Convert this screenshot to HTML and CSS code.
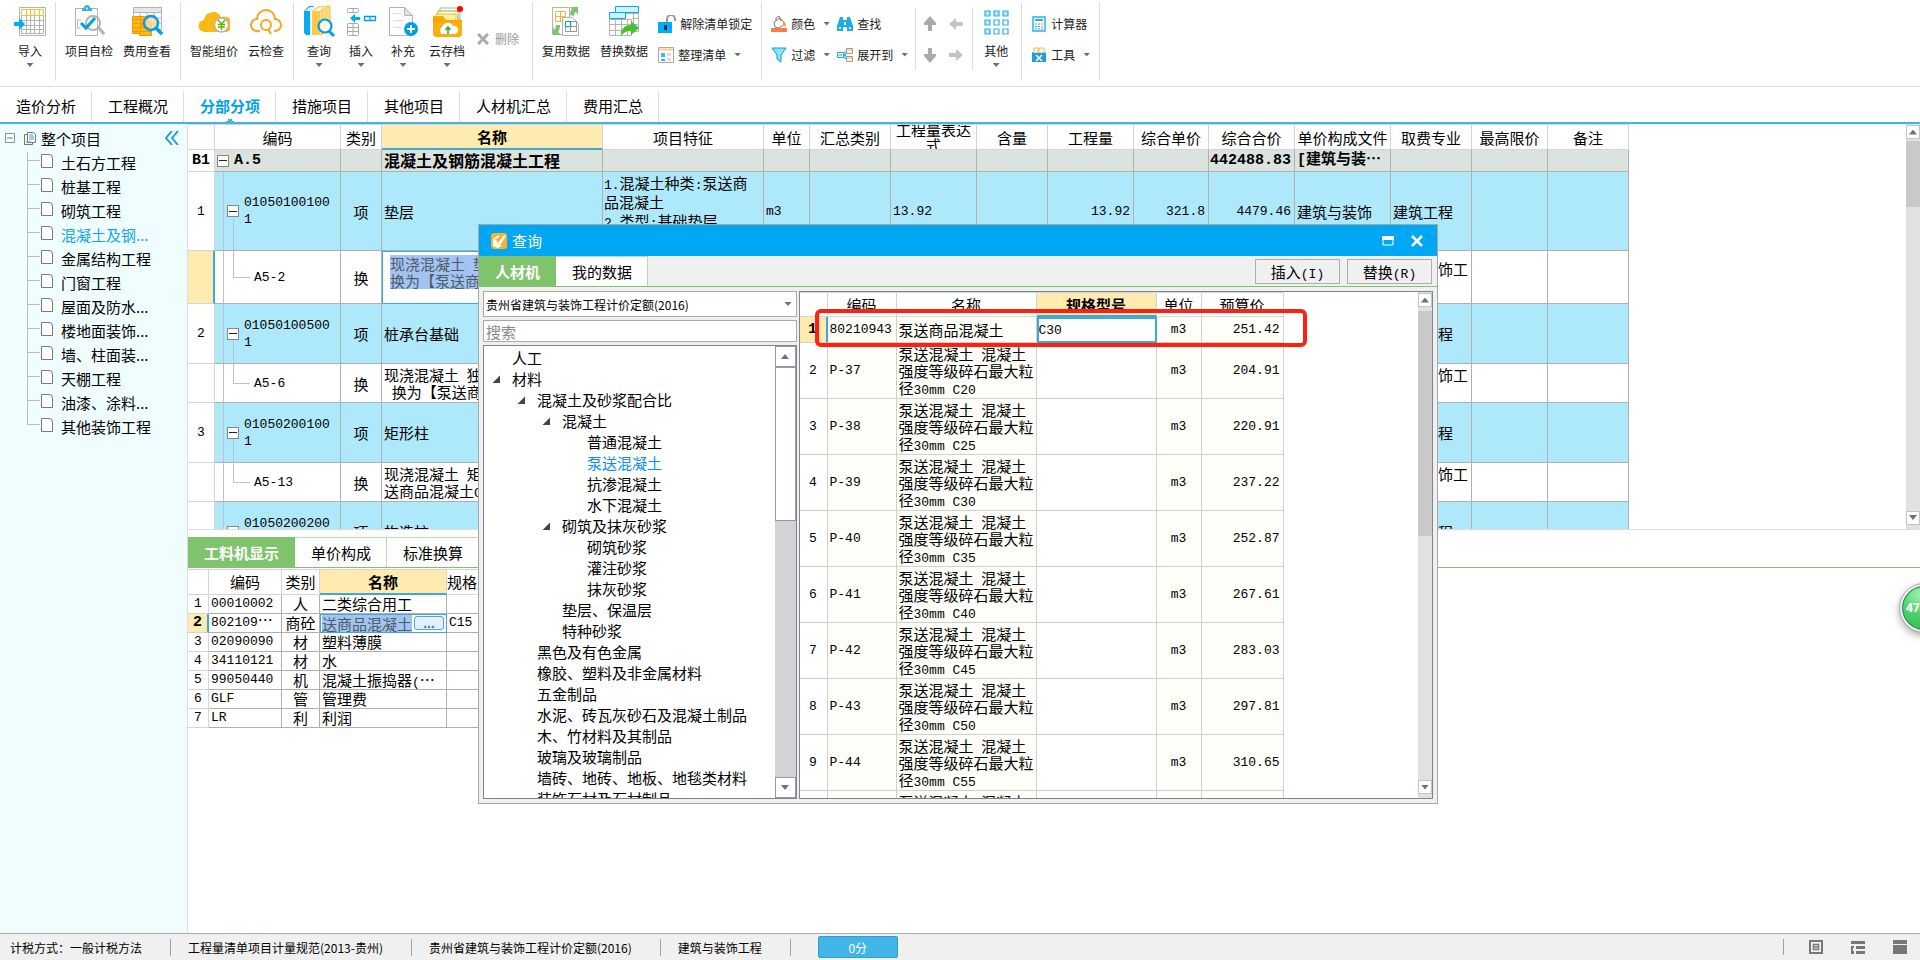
FILE: index.html
```html
<!DOCTYPE html>
<html lang="zh-CN">
<head>
<meta charset="utf-8">
<title>工程计价</title>
<link rel="stylesheet" href="styles.css">
</head>
<body>
<header class="ribbon">
  <div class="group first">
    <button class="big"><svg class="ic32" viewBox="0 0 32 32"><g fill="none" stroke="#b4b4b4" stroke-width="1"><path d="M5.500 2.500h26v28h-26z"/><path d="M7.500 10.500v18h22v-18M7.500 15.500h22M7.500 20.500h22M7.500 24.500h22M12.500 10v19M16.500 10v19M20.500 10v19M25.500 10v19"/></g><path d="M7.500 4.500h22v6h-22zM12.500 4.500v6M16.500 4.500v6M20.500 4.500v6M25.500 4.500v6" fill="none" stroke="#fbc02d"/><path d="M0 17h5v-4l6 6-6 6v-4H0z" fill="#00adef"/></svg><span>导入</span><i class="caret"></i></button>
  </div>
  <div class="group">
    <button class="big"><svg class="ic32" viewBox="0 0 32 32"><path d="M2.500 3.500h22v27h-22z" fill="#fff" stroke="#b4b4b4"/><path d="M9 6V3h2a3 3 0 0 1 6 0h2v3z" fill="#2fb4e8"/><circle cx="14" cy="3.500" r="1" fill="#fff"/><path d="M4 15h4M4.500 15v8h3" fill="none" stroke="#b4b4b4"/><circle cx="20" cy="18" r="7" fill="none" stroke="#b4b4b4" stroke-width="2"/><path d="M25 22l6 7" stroke="#b4b4b4" stroke-width="3"/><path d="M8 18l5 5 9-10" fill="none" stroke="#00a0e9" stroke-width="3"/></svg><span>项目自检</span></button>
    <button class="big"><svg class="ic32" viewBox="0 0 32 32"><path d="M2.500 2.500h28v22h-28z" fill="#fff" stroke="#b4b4b4"/><path d="M2.500 2.500h28v5h-28z" fill="#e6e6e6" stroke="#b4b4b4"/><path d="M16 13h14M16 18h14M9 8v5M16 8v16M23 8v16" stroke="#b4b4b4"/><g fill="#fdb813" stroke="#f39800"><path d="M1.500 11.500h8v17h-8zM9.500 11.500h8v17h-8z"/><path d="M11.500 17.500h9v13h-12v-4z"/><path d="M1.500 14.500h16M1.500 18.500h16M1.500 22.500h16M1.500 26.500h19"/></g><circle cx="20" cy="18" r="7" fill="#ffd9a0" fill-opacity=".8" stroke="#00a0e9" stroke-width="2.500"/><path d="M25 23l6 6" stroke="#00a0e9" stroke-width="3.500"/></svg><span>费用查看</span></button>
  </div>
  <div class="group">
    <button class="big"><svg class="ic32" viewBox="0 0 32 32"><path d="M7 27a6 6 0 0 1-1-12 9 9 0 0 1 17-3 8 8 0 0 1 6 15z" fill="#fdb813"/><circle cx="23.500" cy="20" r="7" fill="#fff" stroke="#b9b4a4" stroke-width="1.500"/><path d="M20 15l3.500 4 3.500-4M20 19.500h7M20 22h7M23.500 19v6" fill="none" stroke="#5fb500" stroke-width="1.400"/></svg><span>智能组价</span></button>
    <button class="big"><svg class="ic32" viewBox="0 0 32 32"><g fill="none" stroke="#fba31c" stroke-width="2"><path d="M10 26H7a6 6 0 0 1 0-12 9 9 0 0 1 18 0 6 6 0 0 1 0 12h-1"/><circle cx="16" cy="20" r="5"/><path d="M18 24l3 5"/></g></svg><span>云检查</span></button>
  </div>
  <div class="group roomy">
    <button class="big"><svg class="ic32" viewBox="0 0 32 32"><path d="M1 6l5-5h5L7 6v24H3l-2-2z" fill="#00adef"/><path d="M2 6l5-4h3L7 6z" fill="#fff"/><path d="M9 6l7-5h6l-5 5v24H9z" fill="#fdc94b"/><path d="M11 6l6-4h3l-4 4z" fill="#fff"/><path d="M18 6l6-5h3v24l-9 5z" fill="#fdd878" stroke="#f5bf50"/><circle cx="22" cy="21" r="6.500" fill="#fff" fill-opacity=".85" stroke="#00a0e9" stroke-width="2.200"/><path d="M26 26l5 5" stroke="#00a0e9" stroke-width="3"/></svg><span>查询</span><i class="caret"></i></button>
    <button class="big"><svg class="ic32" viewBox="0 0 32 32"><g fill="none" stroke="#a8a8a8"><rect x="2.500" y="3.500" width="11" height="4" rx="1"/><rect x="2.500" y="18.500" width="11" height="12" rx="1"/><path d="M8 3v5M8 18v13M2 22.500h12M2 26.500h12"/></g><path d="M5 13l5-4v3h5v3h-5v3z" fill="#00adef"/><path d="M19.500 11.500h11v4h-11zM25 11v5" fill="none" stroke="#00a0e9" stroke-width="1.300"/></svg><span>插入</span><i class="caret"></i></button>
    <button class="big"><svg class="ic32" viewBox="0 0 32 32"><path d="M2.500 2.500h15l8 8v20h-23z" fill="#fff" stroke="#b4b4b4"/><path d="M17.500 2.500v8h8z" fill="#e0e0e0" stroke="#b4b4b4"/><path d="M6 8.500h8M6 15.500h11M6 22.500h8" stroke="#ddd"/><circle cx="24" cy="24" r="7" fill="#00a0e9"/><path d="M24 20v8M20 24h8" stroke="#fff" stroke-width="2"/></svg><span>补充</span><i class="caret"></i></button>
    <button class="big"><svg class="ic32" viewBox="0 0 32 32"><path d="M9 3h20v12H9z" fill="#fff" stroke="#b8ab90"/><path d="M7 6h20v12H7z" fill="#fff" stroke="#80b040"/><path d="M5 9h20v12H5z" fill="#fff3a0" stroke="#fdb813"/><path d="M2 11h10l3 4h16v15l-2 2H4l-2-2z" fill="#fdae0b"/><path d="M2 12h8l3 3h18v2H2z" fill="#f59a00" opacity=".5"/><path d="M11 29a4 4 0 0 1 0-7 6 6 0 0 1 11-1 4 4 0 0 1 2 8z" fill="#fff"/><path d="M17 29v-6M14.500 25l2.500-3 2.500 3" fill="none" stroke="#32a532" stroke-width="1.500"/><circle cx="29" cy="4" r="3" fill="#f00"/></svg><span>云存档</span><i class="caret"></i></button>
    <button class="small muted solo"><svg class="ic12" viewBox="0 0 12 12"><path d="M1 1l10 10M11 1L1 11" stroke="#aaa" stroke-width="3"/></svg><span>删除</span></button>
  </div>
  <div class="group">
    <button class="big"><svg class="ic32" viewBox="0 0 32 32"><path d="M2.500 2.500h17v27h-17z" fill="#fff" stroke="#b4b4b4"/><path d="M5.500 6.500h10v10h-10zM5 11.500h11M10.500 6v11" fill="none" stroke="#fbb03b"/><path d="M12.500 12.500h10l6 6v12h-16z" fill="#fff" stroke="#b4b4b4"/><path d="M15.500 16.500h11v10h-11zM15 21.500h12M20.500 16v11" fill="none" stroke="#999"/><path d="M15.500 16.500h5v5h-5z" fill="none" stroke="#00a0e9"/><path d="M20 2h8v8l-2-3c-1 0-2 2-2 4l-4-1c0-3 1-5 2-6z" fill="#7fc36c"/><path d="M12 30H3v-8l2 3 1-5h4c0 3-1 6-2 7z" fill="#7fc36c"/></svg><span>复用数据</span></button>
    <button class="big"><svg class="ic32" viewBox="0 0 32 32"><g fill="#fff" stroke="#b4b4b4"><path d="M6.500 8.500h24v18h-24z"/><path d="M1.500 14.500h22v16h-22z"/><path d="M7.500 14v17M13.500 14v17M19.500 14v17M25.500 8v10M1 19.500h30M1 25.500h20M24 13.500h7" fill="none"/></g><path d="M7.500 1.500h23v6h-23zM1.500 7.500h16v6h-16z" fill="#c9f3ff" stroke="#00adef"/><path d="M13 31c0-8 4-11 10-11v-4l8 7-8 7v-4c-4 0-7 1-10 5z" fill="#43c02c"/></svg><span>替换数据</span></button>
    <div class="stack">
      <button class="small"><svg class="ic18" viewBox="0 0 18 18"><path d="M9 8V4a4 4 0 0 1 8 0v2" fill="none" stroke="#999" stroke-width="2"/><rect x="0" y="7" width="14" height="11" fill="#00adef"/><path d="M6 10h3v5H6z" fill="#035"/></svg><span>解除清单锁定</span></button>
      <button class="small"><svg class="ic16" viewBox="0 0 16 16"><path d="M.500.500h15v15H.500z" fill="#fff" stroke="#aaa"/><path d="M1 2.500h14" stroke="#fbc987" stroke-width="2"/><path d="M3 7h4M3 9h4M3 13h4" stroke="#00a0e9" stroke-width="1.500"/><path d="M9 6h4v3H9zM9 11h4v3H9z" fill="#ddd"/></svg><span>整理清单</span><i class="caret"></i></button>
    </div>
  </div>
  <div class="group tight">
    <div class="stack">
      <button class="small"><svg class="ic16" viewBox="0 0 16 16"><path d="M3 6l6-4 5 6-6 4-4-1z" fill="#fff" stroke="#8b7b6b"/><path d="M5 5V2l3-2 2 5" fill="none" stroke="#8b7b6b"/><path d="M12 4l3 4-1 3-2-3z" fill="#f8a030"/><path d="M0 12h16v4H0z" fill="#fa7d50"/></svg><span>颜色</span><i class="caret"></i></button>
      <button class="small"><svg class="ic16" viewBox="0 0 16 16"><path d="M1 1h14l-5 7v7l-4-3V8z" fill="#8fe0fb" stroke="#00a0e9"/></svg><span>过滤</span><i class="caret"></i></button>
    </div>
    <div class="stack">
      <button class="small"><svg class="ic16" viewBox="0 0 16 16"><path d="M3 1h3v3h4V1h3l3 9v5h-6v-4H6v4H0v-5z" fill="#1badea"/><path d="M2 11h2v2H2zM12 11h2v2h-2zM7 6h2v3H7z" fill="#fff"/></svg><span>查找</span></button>
      <button class="small"><svg class="ic16" viewBox="0 0 16 16"><path d="M.500 5.500h6v5h-6z" fill="#fff" stroke="#1badea"/><path d="M9.500 1.500h6v5h-6zM9.500 9.500h6v5h-6z" fill="#fff" stroke="#999"/><path d="M10 3h5M10 11h5" stroke="#fbb03b"/><path d="M2 8h3M7 8h2M8 4v8" stroke="#00a0e9"/></svg><span>展开到</span><i class="caret"></i></button>
    </div>
    <div class="arrows">
      <button class="arrow" aria-label="上移"><svg class="ic16" viewBox="0 0 16 16"><path d="M7 0l6 7v2H9v6H5V9H1V7z" fill="#aaa"/></svg></button>
      <button class="arrow" aria-label="左移"><svg class="ic16" viewBox="0 0 16 16"><path d="M1 8l7-6v4h7v4H8v4z" fill="#c4c4c4"/></svg></button>
      <button class="arrow" aria-label="下移"><svg class="ic16" viewBox="0 0 16 16"><path d="M7 16l6-7V7H9V1H5v6H1v2z" fill="#aaa"/></svg></button>
      <button class="arrow" aria-label="右移"><svg class="ic16" viewBox="0 0 16 16"><path d="M15 8L8 2v4H1v4h7v4z" fill="#c4c4c4"/></svg></button>
    </div>
    <button class="big"><svg class="ic32" viewBox="0 0 32 32"><g fill="#fff" stroke="#29b2ea" stroke-width="1.200"><path d="M5 6h5v5H5zM14 6h5v5h-5zM23 6h5v5h-5zM5 15h5v5H5zM5 24h5v5H5z" fill="#bde4f7"/><path d="M14 15h5v5h-5zM23 15h5v5h-5zM14 24h5v5h-5zM23 24h5v5h-5z"/></g></svg><span>其他</span><i class="caret"></i></button>
  </div>
  <div class="group">
    <div class="stack">
      <button class="small"><svg class="ic16" viewBox="0 0 16 16"><path d="M2 1h12v14H2z" fill="#fff" stroke="#29b2ea" stroke-width="1.500"/><path d="M4 4h8" stroke="#29b2ea" stroke-width="2"/><path d="M4 8h2M7 8h2M4 10.500h2M7 10.500h2M4 13h2M7 13h2" stroke="#29b2ea"/><path d="M10 8h2M10 11h2M10 13h2" stroke="#f77"/></svg><span>计算器</span></button>
      <button class="small"><svg class="ic16" viewBox="0 0 16 16"><path d="M3 1h4v5H3zM8 1h5v5H8z" fill="#fff" stroke="#f5b34a"/><path d="M1 5l2 1h10l2-1v10H1z" fill="#1f9fe0"/><path d="M5 8l6 6M11 8l-6 6" stroke="#fff" stroke-width="1.500"/></svg><span>工具</span><i class="caret"></i></button>
    </div>
  </div>
</header>
<nav class="pages">
  <a href="#">造价分析</a><a href="#">工程概况</a><a href="#" class="on">分部分项</a><a href="#">措施项目</a><a href="#">其他项目</a><a href="#">人材机汇总</a><a href="#">费用汇总</a>
</nav>
<div class="work">
  <aside class="side">
    <div class="root"><svg class="ic10" viewBox="0 0 10 10"><path d="M.500.500h9v9h-9z" fill="#fff" stroke="#8a9297"/><path d="M2 5h6" stroke="#189ad0"/></svg><svg class="ic14" viewBox="0 0 14 14"><path d="M1.500 3.500h8v10h-8z" fill="#fff6c8" stroke="#777"/><path d="M4.500 1.500h6l2 2v8h-8z" fill="#fff" stroke="#777"/><path d="M6 4h4M6 6h5M6 8h5M3 11h5" stroke="#29a9d8"/></svg><span>整个项目</span><button class="fold" aria-label="收起"><svg class="ic14" viewBox="0 0 14 14"><path d="M7 0L1 7l6 7M13 0L7 7l6 7" fill="none" stroke="#0a9fd6" stroke-width="1.800"/></svg></button></div>
    <ul class="files">
      <li>土石方工程</li><li>桩基工程</li><li>砌筑工程</li><li class="sel">混凝土及钢...</li><li>金属结构工程</li><li>门窗工程</li><li>屋面及防水...</li><li>楼地面装饰...</li><li>墙、柱面装...</li><li>天棚工程</li><li>油漆、涂料...</li><li>其他装饰工程</li>
    </ul>
  </aside>
  <main class="main">
    <section class="upper">
      <div class="view">
      <table class="grid items">
        <colgroup><col class="w27"><col class="w126"><col class="w41"><col class="w221"><col class="w161"><col class="w46"><col class="w81"><col class="w86"><col class="w71"><col class="w86"><col class="w75"><col class="w86"><col class="w96"><col class="w81"><col class="w76"><col class="w81"></colgroup>
        <thead><tr><th></th><th>编码</th><th>类别</th><th class="cur">名称</th><th>项目特征</th><th>单位</th><th>汇总类别</th><th><div class="clip">工程量表达式</div></th><th>含量</th><th>工程量</th><th>综合单价</th><th>综合合价</th><th>单价构成文件</th><th>取费专业</th><th>最高限价</th><th>备注</th></tr></thead>
        <tbody>
          <tr class="sum"><td class="c">B1</td><td class="t0"><div class="code"><i class="box"></i>A.5</div></td><td></td><td class="cj">混凝土及钢筋混凝土工程</td><td></td><td></td><td></td><td></td><td></td><td></td><td></td><td class="r">442488.83</td><td>[<span class="cj">建筑与装…</span></td><td></td><td></td><td></td></tr>
          <tr class="item tall"><td class="c n">1</td><td class="t1 n"><div class="code"><i class="box"></i><span>01050100100<br>1</span></div></td><td class="c">项</td><td>垫层</td><td class="feat"><span class="n">1.</span>混凝土种类<span class="n">:</span>泵送商<br>品混凝土<br><span class="n">2.</span>类型<span class="n">:</span>基础垫层<br>&nbsp;</td><td class="n">m3</td><td></td><td class="n">13.92</td><td></td><td class="r n">13.92</td><td class="r n">321.8</td><td class="r n">4479.46</td><td>建筑与装饰</td><td>建筑工程</td><td></td><td></td></tr>
          <tr class="sub edit"><td class="mark"></td><td class="t2 n"><div class="code">A5-2</div></td><td class="c">换</td><td class="editing"><div class="picked">现浇混凝土<span class="n"> </span>垫层<br>换为【泵送商品混凝土】</div></td><td></td><td></td><td></td><td></td><td></td><td></td><td></td><td></td><td></td><td>建筑装饰工程</td><td></td><td></td></tr>
          <tr class="item"><td class="c n">2</td><td class="t1 n"><div class="code"><i class="box"></i><span>01050100500<br>1</span></div></td><td class="c">项</td><td>桩承台基础</td><td></td><td></td><td></td><td></td><td></td><td></td><td></td><td></td><td></td><td>建筑工程</td><td></td><td></td></tr>
          <tr class="sub"><td></td><td class="t2 n"><div class="code">A5-6</div></td><td class="c">换</td><td>现浇混凝土<span class="n"> </span>独立基础<br><span class="n">&nbsp;</span>换为【泵送商品混凝土】</td><td></td><td></td><td></td><td></td><td></td><td></td><td></td><td></td><td></td><td>建筑装饰工程</td><td></td><td></td></tr>
          <tr class="item"><td class="c n">3</td><td class="t1 n"><div class="code"><i class="box"></i><span>01050200100<br>1</span></div></td><td class="c">项</td><td>矩形柱</td><td></td><td></td><td></td><td></td><td></td><td></td><td></td><td></td><td></td><td>建筑工程</td><td></td><td></td></tr>
          <tr class="sub"><td></td><td class="t2 n"><div class="code">A5-13</div></td><td class="c">换</td><td>现浇混凝土<span class="n"> </span>矩形柱<br>送商品混凝土<span class="n">C30</span></td><td></td><td></td><td></td><td></td><td></td><td></td><td></td><td></td><td></td><td>建筑装饰工程</td><td></td><td></td></tr>
          <tr class="item"><td class="c n"></td><td class="t1 n"><div class="code"><i class="box"></i><span>01050200200<br>1</span></div></td><td class="c">项</td><td>构造柱</td><td></td><td></td><td></td><td></td><td></td><td></td><td></td><td></td><td></td><td>建筑工程</td><td></td><td></td></tr>
        </tbody>
      </table>
      </div>
      <div class="bar"><button class="up" aria-label="向上"></button><i class="thumb short"></i><button class="down" aria-label="向下"></button></div>
    </section>
    <section class="lower">
      <div class="tabs"><button class="on">工料机显示</button><button>单价构成</button><button>标准换算</button></div>
      <table class="grid parts">
        <colgroup><col class="w21"><col class="w73"><col class="w38"><col class="w127"><col class="w81"></colgroup>
        <thead><tr><th></th><th>编码</th><th>类别</th><th class="cur">名称</th><th class="left">规格及型号</th></tr></thead>
        <tbody>
          <tr><td class="c n">1</td><td class="n">00010002</td><td class="c">人</td><td>二类综合用工</td><td></td></tr>
          <tr><td class="c mark b">2</td><td class="n">802109<span class="e">…</span></td><td class="c">商砼</td><td class="editing"><div class="pick"><span class="picked">送商品混凝土</span><button class="more" aria-label="更多">...</button></div></td><td class="n">C15</td></tr>
          <tr><td class="c n">3</td><td class="n">02090090</td><td class="c">材</td><td>塑料薄膜</td><td></td></tr>
          <tr><td class="c n">4</td><td class="n">34110121</td><td class="c">材</td><td>水</td><td></td></tr>
          <tr><td class="c n">5</td><td class="n">99050440</td><td class="c">机</td><td>混凝土振捣器<span class="n">(</span><span class="e">…</span></td><td></td></tr>
          <tr><td class="c n">6</td><td class="n">GLF</td><td class="c">管</td><td>管理费</td><td></td></tr>
          <tr><td class="c n">7</td><td class="n">LR</td><td class="c">利</td><td>利润</td><td></td></tr>
        </tbody>
      </table>
    </section>
  </main>
</div>
<footer class="status">
  <span>计税方式：一般计税方法</span><span>工程量清单项目计量规范(2013-贵州)</span><span>贵州省建筑与装饰工程计价定额(2016)</span><span>建筑与装饰工程</span><button class="score">0分</button>
  <div class="views">
    <button aria-label="视图一"><svg class="ic14" viewBox="0 0 14 14"><path d="M1 1h12v12H1z" fill="none" stroke="#777" stroke-width="2"/><path d="M4.500 4.500h5v5h-5zM4 7h6" fill="none" stroke="#777" stroke-width="1.500"/></svg></button>
    <button aria-label="视图二"><svg class="ic14" viewBox="0 0 14 14"><path d="M0 1h14v3H0zM0 6h3v2h-1v3h1v3H0zM5 6h9v3H5zM5 11h9v3H5z" fill="#777"/></svg></button>
    <button aria-label="视图三"><svg class="ic14" viewBox="0 0 14 14"><path d="M0 0h14v4H0zM0 5h14v9H0z" fill="#777"/></svg></button>
  </div>
</footer>

<div class="badge">47</div>

<div class="dialog" role="dialog" aria-label="查询">
  <div class="title"><svg class="ic16" viewBox="0 0 16 16"><rect width="16" height="16" rx="3" fill="#f9b233"/><path d="M2 6l3 1 2 3 6-8 2 1-6 9 2 1-4 2-5-2z" fill="#fff"/><path d="M3 6l5-3" stroke="#fff" stroke-width="2"/></svg><span>查询</span>
    <button class="wb" aria-label="最大化"><svg class="ic12" viewBox="0 0 12 12"><path d="M1 2h10v8H1z" fill="none" stroke="#fff"/><path d="M0 1h12v4H0z" fill="#fff"/></svg></button>
    <button class="wb" aria-label="关闭"><svg class="ic12" viewBox="0 0 12 12"><path d="M1 1l10 10M11 1L1 11" stroke="#fff" stroke-width="2.500"/></svg></button>
  </div>
  <div class="tabs"><button class="on">人材机</button><button>我的数据</button><div class="acts"><button class="act">插入<span class="n">(I)</span></button><button class="act">替换<span class="n">(R)</span></button></div></div>
  <div class="body">
    <div class="pick-col">
      <div class="combo"><select aria-label="定额库"><option>贵州省建筑与装饰工程计价定额(2016)</option></select><i class="caret"></i></div>
      <input class="search" type="text" placeholder="搜索" aria-label="搜索">
      <div class="treebox">
        <ul class="tree">
          <li>人工</li>
          <li class="open">材料</li>
          <li><ul>
            <li class="open">混凝土及砂浆配合比</li>
            <li><ul>
              <li class="open">混凝土</li>
              <li><ul><li>普通混凝土</li><li class="sel">泵送混凝土</li><li>抗渗混凝土</li><li>水下混凝土</li></ul></li>
              <li class="open">砌筑及抹灰砂浆</li>
              <li><ul><li>砌筑砂浆</li><li>灌注砂浆</li><li>抹灰砂浆</li></ul></li>
              <li>垫层、保温层</li>
              <li>特种砂浆</li>
            </ul></li>
            <li>黑色及有色金属</li><li>橡胶、塑料及非金属材料</li><li>五金制品</li><li>水泥、砖瓦灰砂石及混凝土制品</li><li>木、竹材料及其制品</li><li>玻璃及玻璃制品</li><li>墙砖、地砖、地板、地毯类材料</li><li>装饰石材及石材制品</li>
          </ul></li>
        </ul>
        <div class="bar wide"><button class="up" aria-label="向上"></button><i class="thumb"></i><button class="down" aria-label="向下"></button></div>
      </div>
    </div>
    <div class="pricebox">
      <div class="view">
      <table class="grid prices">
        <colgroup><col class="w28"><col class="w69"><col class="w140"><col class="w120"><col class="w45"><col class="w82"></colgroup>
        <thead><tr><th></th><th>编码</th><th>名称</th><th class="cur">规格型号</th><th>单位</th><th>预算价</th></tr></thead>
        <tbody>
          <tr class="one"><td class="c mark b">1</td><td class="n">80210943</td><td>泵送商品混凝土</td><td class="n focus">C30</td><td class="c n">m3</td><td class="r n">251.42</td></tr>
          <tr><td class="c n">2</td><td class="n">P-37</td><td>泵送混凝土<span class="n"> </span>混凝土强度等级碎石最大粒径<span class="n">30mm C20</span></td><td></td><td class="c n">m3</td><td class="r n">204.91</td></tr>
          <tr><td class="c n">3</td><td class="n">P-38</td><td>泵送混凝土<span class="n"> </span>混凝土强度等级碎石最大粒径<span class="n">30mm C25</span></td><td></td><td class="c n">m3</td><td class="r n">220.91</td></tr>
          <tr><td class="c n">4</td><td class="n">P-39</td><td>泵送混凝土<span class="n"> </span>混凝土强度等级碎石最大粒径<span class="n">30mm C30</span></td><td></td><td class="c n">m3</td><td class="r n">237.22</td></tr>
          <tr><td class="c n">5</td><td class="n">P-40</td><td>泵送混凝土<span class="n"> </span>混凝土强度等级碎石最大粒径<span class="n">30mm C35</span></td><td></td><td class="c n">m3</td><td class="r n">252.87</td></tr>
          <tr><td class="c n">6</td><td class="n">P-41</td><td>泵送混凝土<span class="n"> </span>混凝土强度等级碎石最大粒径<span class="n">30mm C40</span></td><td></td><td class="c n">m3</td><td class="r n">267.61</td></tr>
          <tr><td class="c n">7</td><td class="n">P-42</td><td>泵送混凝土<span class="n"> </span>混凝土强度等级碎石最大粒径<span class="n">30mm C45</span></td><td></td><td class="c n">m3</td><td class="r n">283.03</td></tr>
          <tr><td class="c n">8</td><td class="n">P-43</td><td>泵送混凝土<span class="n"> </span>混凝土强度等级碎石最大粒径<span class="n">30mm C50</span></td><td></td><td class="c n">m3</td><td class="r n">297.81</td></tr>
          <tr><td class="c n">9</td><td class="n">P-44</td><td>泵送混凝土<span class="n"> </span>混凝土强度等级碎石最大粒径<span class="n">30mm C55</span></td><td></td><td class="c n">m3</td><td class="r n">310.65</td></tr>
          <tr><td></td><td></td><td>泵送混凝土<span class="n"> </span>混凝土强度等级碎石最大粒径<span class="n">30mm C60</span></td><td></td><td></td><td></td></tr>
        </tbody>
      </table>
      </div>
      <div class="bar"><button class="up" aria-label="向上"></button><i class="thumb"></i><button class="down" aria-label="向下"></button></div>
    </div>
  </div>
  <div class="callout"></div>
</div>
</body>
</html>
```
FILE: styles.css
```css
* { box-sizing: border-box; }
body {
  margin: 0;
  height: 100vh;
  display: flex;
  flex-direction: column;
  overflow: hidden;
  position: relative;
  background: #fff;
  color: #000;
  font: 15px/17px "Noto Sans CJK SC", sans-serif;
}
button { margin: 0; padding: 0; border: 0; background: none; font: inherit; color: inherit; }
svg { display: block; flex: none; }
ul { list-style: none; margin: 0; padding: 0; }
.ic32 { width: 32px; height: 32px; }
.ic18 { width: 18px; height: 18px; }
.ic16 { width: 16px; height: 16px; }
.ic14 { width: 14px; height: 14px; }
.ic12 { width: 12px; height: 12px; }
.ic10 { width: 10px; height: 10px; }
.caret { width: 7px; height: 4px; flex: none; background: #6b6f80; clip-path: polygon(0 0, 100% 0, 50% 100%); }

/* ribbon */
.ribbon { flex: none; display: flex; height: 87px; border-bottom: 1px solid #ddd; font-size: 12px; color: #222; }
.group { display: flex; gap: 10px; margin: 2px 0 5px; padding: 3px 9px 0; border-right: 1px solid #ddd; }
.group.first { padding-left: 14px; }
.group.tight { gap: 7px; }
.group.roomy { padding-right: 13px; }
.big { display: flex; flex-direction: column; align-items: center; align-self: flex-start; white-space: nowrap; }
.big span { margin-top: 5px; }
.big .caret { margin-top: 4px; }
.stack { display: flex; flex-direction: column; padding-top: 3px; }
.small { display: flex; align-items: center; gap: 4px; height: 31px; white-space: nowrap; }
.small .caret { margin-left: 4px; }
.solo { margin: 18px 0 0 2px; }
.solo span { margin-left: 2px; }
.muted { color: #999; }
.arrows { display: grid; grid-template-columns: 25px 24px; grid-template-rows: 31px 31px; align-self: flex-start; margin: 3px 0; padding: 0 0 0 7px; border: solid #ddd; border-width: 0 1px; }
.arrow { display: flex; align-items: center; }

/* page tabs */
.pages { flex: none; display: flex; height: 37px; padding-top: 4px; border-bottom: 2px solid #41b6e0; }
.pages a { display: flex; align-items: center; padding: 0 15px 2px 16px; border-right: 1px solid #ddd; color: #000; text-decoration: none; }
.pages a.on { color: #00a2ec; font-weight: 700; background: linear-gradient(#41b6e0, #41b6e0) 50% 100% / 4px 3px no-repeat, linear-gradient(#41b6e0, #41b6e0) 50% 100% / 8px 1px no-repeat; }

.work { flex: 1; min-height: 0; display: flex; }
.side { flex: none; width: 188px; background: #f0fdff; border-right: 1px solid #ddd; }
.root { display: flex; align-items: center; height: 28px; padding: 0 8px 0 5px; }
.root .ic10 { margin-right: 8px; }
.root span { margin-left: 4px; }
.fold { margin-left: auto; }
.files li {
  height: 24px;
  padding: 0 0 0 60px;
  line-height: 22px;
  background:
    linear-gradient(#bbb, #bbb) 27px 0 / 1px 100% no-repeat,
    linear-gradient(#bbb, #bbb) 27px 8px / 13px 1px no-repeat;
  display: flex;
}
.files li::before { content: ""; width: 10px; height: 12px; margin: 2px 8px 0 -19px; border: 1px solid #777; border-radius: 0 4px 0 0; background: #fff; }
.files li:last-child { background-size: 1px 8px, 13px 1px; }
.files .sel { color: #12a7df; }

.main { flex: 1; min-width: 0; display: grid; grid-template-rows: minmax(0, 1fr) minmax(0, 1fr); }
.upper { display: flex; min-height: 0; overflow: hidden; }
.view { flex: 1; min-width: 0; overflow: hidden; }
.lower { border-top: 1px solid #ddd; padding-top: 7px; overflow: hidden; }

/* grids */
.grid { table-layout: fixed; border-collapse: separate; border-spacing: 0; }
.grid th, .grid td { padding: 0 0 0 2px; border: solid #b0b0b0; border-width: 0 1px 1px 0; text-align: left; overflow: hidden; }
.grid th { padding: 0; text-align: center; font-weight: 400; border-color: #d5d5d5; white-space: nowrap; }
.grid thead th { border-top: 1px solid #d5d5d5; }
.grid th.cur { background: #ffebb0; font-weight: 700; border-bottom: 2px solid #3ca9d8; }
.grid th.left { text-align: left; }
.grid td.c { text-align: center; padding: 0; }
.grid td.r { text-align: right; padding: 0 3px 0 0; }
.grid td:first-child { border-color: #d5d5d5; }
.n { font: 13px/17px "Liberation Mono", "Noto Sans CJK SC", monospace; }
span.n { line-height: 0; }
.e { font: 15px/0 "Noto Sans CJK SC", sans-serif; }
.grid td.mark { background: #ffebb0; border-right: 2px solid #3ca9d8; }
.b { font: 700 15px/17px "Liberation Mono", monospace; }
.w21 { width: 21px; } .w27 { width: 27px; } .w28 { width: 28px; } .w38 { width: 38px; } .w41 { width: 41px; }
.w45 { width: 45px; } .w46 { width: 46px; } .w69 { width: 69px; } .w71 { width: 71px; } .w73 { width: 73px; }
.w75 { width: 75px; } .w76 { width: 76px; } .w81 { width: 81px; } .w82 { width: 82px; } .w86 { width: 86px; }
.w96 { width: 96px; } .w120 { width: 120px; } .w126 { width: 126px; } .w127 { width: 127px; } .w140 { width: 140px; }
.w161 { width: 161px; } .w221 { width: 221px; }

.items { width: 1441px; }
.items thead tr { height: 26px; }
.items td { white-space: nowrap; }
.items td:nth-child(14) { white-space: normal; }
.clip { display: flex; align-items: center; height: 24px; line-height: 15px; white-space: normal; overflow: hidden; }
.sum { height: 22px; }
.sum td { background: #dae3de; font: 700 15px/17px "Liberation Mono", "Noto Sans CJK SC", monospace; }
.sum td.cj { font: 700 16px/17px "Noto Sans CJK SC", sans-serif; }
.sum span.cj { font: 700 15px/0 "Noto Sans CJK SC", sans-serif; }
.item { height: 60px; }
.item td { background: #aee8fb; }
.item td:first-child, .sum td:first-child { background: #fff; }
.tall { height: 79px; }
.sub { height: 39px; }
.edit { height: 53px; }
.grid td.feat { line-height: 19px; padding-left: 1px; }
.code { display: flex; align-items: center; }
.box { flex: none; width: 12px; height: 12px; border: 1px solid #888; background: linear-gradient(#222, #222) 50% 50% / 8px 1px no-repeat, #fff; }
.grid td.t0, .grid td.t1, .grid td.t2 { padding-left: 0; }
.t0 .code { padding-left: 2px; gap: 5px; }
.t1 .code, .t2 .code {
  height: 100%;
  padding-left: 12px;
  gap: 5px;
  background: linear-gradient(#bcc4c8, #bcc4c8) 8px 0 / 1px 100% no-repeat, linear-gradient(#bcc4c8, #bcc4c8) 18px 100% / 1px 40% no-repeat;
}
.items td.t1, .items td.t2 { height: 1px; }
.t2 .code {
  padding-left: 39px;
  background: linear-gradient(#bcc4c8, #bcc4c8) 8px 0 / 1px 100% no-repeat, linear-gradient(#bcc4c8, #bcc4c8) 18px 0 / 1px 50% no-repeat, linear-gradient(#bcc4c8, #bcc4c8) 18px 50% / 17px 1px no-repeat;
}
.grid td.editing { border: 1px solid #3ca9d8; }
.picked { background: #a3c4f1; color: #4c5a6c; }
.edit .editing { vertical-align: top; padding: 3px 0 0 7px; }

.parts { width: 340px; }
.parts thead tr { height: 26px; }
.parts tbody tr { height: 19px; }
.parts td { white-space: nowrap; }
.pick { display: flex; justify-content: space-between; align-items: center; }
.grid.parts td.editing { padding: 0 2px 0 1px; }
.more { width: 30px; height: 14px; border: 1px solid #5f9fdc; border-radius: 3px; background: #e4effa; color: #2f80cc; font: 700 14px/5px "Liberation Sans", sans-serif; }

/* green tab strips */
.tabs { display: flex; height: 31px; border-bottom: 1px solid #7fc36c; }
.tabs > button { padding: 0 15px 0 16px; background: #fff; border: solid #b5dfa8; border-width: 1px 1px 0 0; }
.tabs > button.on { background: #7fc36c; border-color: #7fc36c; color: #fff; font-weight: 700; }
.lower .tabs { margin-bottom: 1px; }

/* scrollbars */
.bar { flex: none; display: flex; flex-direction: column; width: 14px; padding: 1px 0 4px; background: #e1e1e1; }
.bar button { flex: none; height: 14px; display: flex; align-items: center; justify-content: center; background: #fff; border: 1px solid #c4c4c4; }
.bar button::before { content: ""; width: 8px; height: 5px; background: #6b6f80; clip-path: polygon(0 0, 100% 0, 50% 100%); }
.bar .up::before { clip-path: polygon(50% 0, 100% 100%, 0 100%); }
.bar .down { margin-top: auto; }
.thumb { height: 45%; margin-top: 4px; background: #c9c9c9; }
.thumb.short { height: 66px; margin-top: 2px; }
.bar.wide { width: 21px; padding: 0; background: #d3d3d3; }
.bar.wide button { height: 21px; border-color: #999; }
.bar.wide .thumb { height: 34%; margin: 0; background: #fff; border: 1px solid #999; }

/* status bar */
.status { flex: none; display: flex; align-items: center; height: 27px; padding: 0 13px 0 10px; background: #f0f0f0; border-top: 1px solid #aaa; font-size: 12px; }
.status span { padding-right: 28px; margin-right: 17px; border-right: 1px solid #9aa4ae; white-space: nowrap; }
.score { width: 80px; height: 22px; margin-left: 10px; background: #41b6e6; border: 1px solid #2f9fd0; border-radius: 2px; color: #fff; }
.views { display: flex; gap: 28px; margin-left: auto; padding: 1px 0 1px 25px; border-left: 1px solid #9aa4ae; }

.badge { position: absolute; right: -28px; top: 584px; width: 48px; height: 48px; border-radius: 50%; border: 2px solid #eee; outline: 1px solid #aaa; background: radial-gradient(circle at 40% 20%, #9ff0ae, #4bd06a 45%, #2db452); box-shadow: inset 0 0 0 1px #14864a, 0 3px 8px #999; color: #fff; font: 700 12px/44px "Open Sans", sans-serif; padding-left: 4px; }

/* lookup window */
.dialog { position: absolute; left: 478px; top: 224px; width: 50%; height: 580px; display: flex; flex-direction: column; background: #f0f0f0; border: 1px solid #a6a6a6; }
.title { flex: none; display: flex; align-items: center; height: 31px; padding: 0 14px 0 12px; background: #00a8f3; color: #fff; }
.title span { margin: 0 auto 0 5px; }
.wb { margin-left: 17px; }
.dialog .tabs { flex: none; }
.acts { display: flex; gap: 7px; align-items: center; margin-left: auto; padding-right: 5px; }
.act { width: 85px; height: 25px; border: 1px solid #adadad; background: #f0f0f0; }
.body { flex: 1; min-height: 0; display: flex; gap: 2px; padding: 4px; }
.pick-col { flex: none; width: 33%; display: flex; flex-direction: column; gap: 3px; }
.combo { flex: none; display: grid; align-items: center; }
.combo select { grid-area: 1 / 1; appearance: none; width: 100%; height: 26px; padding: 0 2px; border: 1px solid #aaa; border-radius: 0; background: #fff; color: #000; font: 12px "Noto Sans CJK SC", sans-serif; }
.combo .caret { grid-area: 1 / 1; justify-self: end; margin-right: 5px; pointer-events: none; }
.search { flex: none; height: 22px; padding: 0 2px; border: 1px solid #aaa; background: #fff; font: inherit; }
.search::placeholder { color: #888; opacity: 1; }
.treebox { flex: 1; min-height: 0; display: flex; justify-content: space-between; background: #fff; border: 1px solid #7f8490; overflow: hidden; }
.tree { padding: 1px 0 0 8px; white-space: nowrap; }
.tree ul { padding-left: 25px; }
.tree li { line-height: 21px; }
.tree li:not(:has(ul)) { padding-left: 20px; }
.tree li.open:not(:has(ul)) { padding-left: 0; }
.tree .open::before { content: ""; display: inline-block; width: 8px; height: 8px; margin: 0 12px 3px 0; vertical-align: middle; background: #444; clip-path: polygon(100% 0, 100% 100%, 0 100%); }
.tree .sel { color: #0a8df5; }
.pricebox { flex: 1; min-width: 0; display: flex; background: #fff; border: 1px solid #7f8490; overflow: hidden; }
.prices { width: 484px; }
.prices thead tr { height: 25px; }
.prices tbody tr { height: 56px; }
.prices tbody tr.one { height: 26px; }
.grid.prices td { border-color: #d0d0d0; background: #fffef9; word-break: break-all; }
.grid.prices td:first-child, .grid.prices td:nth-child(4) { background: #fff; }
.grid.prices td.mark { background: #ffebb0; border-right-color: #3ca9d8; }
.grid.prices td.focus { border: 2px solid #3ca9d8; padding-left: 0; }
.callout { position: absolute; left: 336px; top: 84px; width: 492px; height: 38px; border: 4px solid #ff2010; border-radius: 6px; }
```
